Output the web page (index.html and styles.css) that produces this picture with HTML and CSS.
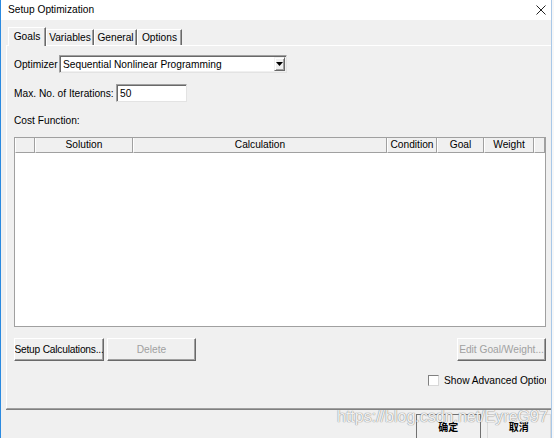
FILE: index.html
```html
<!DOCTYPE html>
<html>
<head>
<meta charset="utf-8">
<link rel="stylesheet" href="styles.css">
</head>
<body>
<div class="window">
  <div class="titlebar">
    <span class="title">Setup Optimization</span>
    <svg class="close" width="10" height="10" viewBox="0 0 10 10"><path d="M0.5 0.5 L9.5 9.5 M9.5 0.5 L0.5 9.5" stroke="#222" stroke-width="1" fill="none"/></svg>
  </div>
  <div class="tabs">
    <div class="tab active w-goals">Goals</div>
    <div class="tab w-vars">Variables</div>
    <div class="tab w-gen">General</div>
    <div class="tab w-opt">Options</div>
  </div>
  <div class="panel">
    <div class="row row-opt">
      <span class="lbl lbl-opt">Optimizer</span>
      <div class="select">
        <span class="sel-text">Sequential Nonlinear Programming</span>
        <span class="sel-btn"><svg width="7" height="4" viewBox="0 0 7 4"><path d="M0 0 H7 L3.5 4 Z" fill="#000"/></svg></span>
      </div>
    </div>
    <div class="row row-iter">
      <span class="lbl lbl-iter">Max. No. of Iterations:</span>
      <div class="input">50</div>
    </div>
    <div class="cost">Cost Function:</div>
    <div class="table">
      <div class="thead">
        <div class="th c0"></div>
        <div class="th c1">Solution</div>
        <div class="th c2">Calculation</div>
        <div class="th c3">Condition</div>
        <div class="th c4">Goal</div>
        <div class="th c5">Weight</div>
        <div class="th c6"></div>
      </div>
      <div class="tbody"></div>
    </div>
    <div class="btnrow">
      <div class="btn b-setup">Setup Calculations...</div>
      <div class="btn b-del disabled">Delete</div>
      <div class="spacer"></div>
      <div class="btn b-edit disabled">Edit Goal/Weight...</div>
    </div>
    <div class="chkrow">
      <span class="chk"></span>
      <span class="chk-text">Show Advanced Options</span>
    </div>
  </div>
  <div class="bottom">
    <div class="dbtn ok">确定</div>
    <div class="dbtn cancel">取消</div>
  </div>
  <div class="watermark">https://blog.csdn.net/EyreG97</div>
</div>
</body>
</html>
```
FILE: styles.css
```css
html, body {
  margin: 0;
  padding: 0;
  background: #f7f7f7;
}
body {
  width: 554px;
  height: 438px;
  overflow: hidden;
  font-family: "Liberation Sans", Arial, "Noto Sans CJK SC", sans-serif;
  font-size: 10.2px;
  color: #000;
}
.window {
  position: relative;
  width: 552px;
  height: 438px;
  box-sizing: border-box;
  border-left: 1px solid #2b8ae0;
  border-right: 1px solid #a9c8e8;
  background: #f0f0f0;
  display: flex;
  flex-direction: column;
  overflow: hidden;
}
.titlebar {
  height: 20px;
  flex-shrink: 0;
  background: #fff;
  display: flex;
  align-items: center;
  justify-content: space-between;
  padding: 0 5px 1px 7px;
  box-sizing: border-box;
}
.close {
  display: block;
}
.tabs {
  display: flex;
  align-items: flex-end;
  height: 18px;
  flex-shrink: 0;
  margin-top: 7px;
  padding-left: 7px;
}
.tab {
  height: 16px;
  box-sizing: border-box;
  border-top: 1px solid #fff;
  border-left: 1px solid #fff;
  border-right: 1px solid #696969;
  box-shadow: inset -1px 0 #a0a0a0;
  display: flex;
  align-items: center;
  justify-content: center;
}
.tab.active {
  height: 19px;
  margin-bottom: -1px;
  background: #f0f0f0;
  position: relative;
  z-index: 1;
  padding-bottom: 1px;
}
.w-goals { width: 38px; }
.w-vars { width: 48px; }
.w-gen { width: 43px; }
.w-opt { width: 45px; }
.panel {
  margin-left: 5px;
  height: 364px;
  flex-shrink: 0;
  box-sizing: border-box;
  border-top: 1px solid #fff;
  border-left: 1px solid #fff;
  border-bottom: 1px solid #a0a0a0;
  box-shadow: 0 1px #808080;
  padding-left: 7px;
  display: flex;
  flex-direction: column;
}
.row {
  display: flex;
  align-items: center;
  height: 18px;
  flex-shrink: 0;
}
.row-opt { margin-top: 9px; }
.row-iter { margin-top: 11px; }
.lbl-opt { width: 45px; }
.lbl-iter { width: 102px; }
.select {
  width: 228px;
  height: 18px;
  box-sizing: border-box;
  background: #fff;
  border: 1px solid;
  border-color: #a0a0a0 #e3e3e3 #e3e3e3 #a0a0a0;
  box-shadow: inset 1px 1px #696969, inset -1px -1px #f0f0f0;
  display: flex;
  align-items: center;
  justify-content: space-between;
  padding-left: 3px;
}
.sel-btn {
  width: 11px;
  height: 14px;
  margin-right: 1px;
  box-sizing: border-box;
  background: #f0f0f0;
  border: 1px solid;
  border-color: #f0f0f0 #696969 #696969 #f0f0f0;
  box-shadow: inset 1px 1px #fff, inset -1px -1px #a0a0a0;
  display: flex;
  align-items: center;
  justify-content: center;
}
.input {
  width: 71px;
  height: 18px;
  box-sizing: border-box;
  background: #fff;
  border: 1px solid;
  border-color: #a0a0a0 #e3e3e3 #e3e3e3 #a0a0a0;
  box-shadow: inset 1px 1px #696969;
  padding-left: 3px;
  display: flex;
  align-items: center;
}
.cost {
  margin-top: 13px;
  height: 12px;
  line-height: 12px;
  flex-shrink: 0;
}
.table {
  margin-top: 10px;
  width: 532px;
  height: 190px;
  flex-shrink: 0;
  box-sizing: border-box;
  border: 1px solid #a0a0a0;
  background: #fff;
  display: flex;
  flex-direction: column;
}
.thead {
  display: flex;
  height: 15px;
  background: #f0f0f0;
}
.th {
  box-sizing: border-box;
  height: 15px;
  border-right: 1px solid #a0a0a0;
  border-bottom: 1px solid #a0a0a0;
  border-left: 1px solid #fff;
  text-align: center;
  line-height: 14px;
}
.c0 { width: 20px; }
.c1 { width: 98px; }
.c2 { width: 254px; }
.c3 { width: 50px; }
.c4 { width: 47px; }
.c5 { width: 50px; }
.c6 { width: 11px; }
.tbody {
  flex: 1;
  background: #fff;
}
.btnrow {
  display: flex;
  margin-top: 11px;
  width: 532px;
  gap: 3px;
  flex-shrink: 0;
}
.spacer { flex: 1; }
.btn {
  height: 23px;
  box-sizing: border-box;
  border: 1px solid;
  border-color: #fff #696969 #696969 #fff;
  box-shadow: inset -1px -1px #a0a0a0;
  display: flex;
  align-items: center;
  justify-content: center;
  white-space: nowrap;
  overflow: hidden;
}
.b-setup { width: 90px; letter-spacing: -0.2px; }
.b-del { width: 89px; }
.b-edit { width: 89px; }
.disabled { color: #a0a0a0; }
.chkrow {
  margin-top: 13px;
  display: flex;
  align-items: center;
  justify-content: flex-end;
  width: 532px;
  height: 12px;
  flex-shrink: 0;
  overflow: hidden;
}
.chk {
  width: 9px;
  height: 9px;
  background: #fff;
  border: 1px solid;
  border-color: #808080 #d8d8d8 #d8d8d8 #808080;
  margin-right: 5px;
  flex-shrink: 0;
}
.chk-text {
  width: 102px;
  overflow: hidden;
  white-space: nowrap;
}
.bottom {
  display: flex;
  margin-top: 5px;
  padding-left: 415px;
  gap: 6px;
}
.dbtn {
  width: 66px;
  height: 26px;
  box-sizing: border-box;
  display: flex;
  align-items: center;
  justify-content: center;
  font-family: "Noto Sans CJK SC", sans-serif;
  font-size: 10px;
  font-weight: bold;
  padding-bottom: 2px;
}
.ok {
  border: 1px solid #707070;
  border-bottom: none;
}
.cancel {
  border: 1px solid #dadada;
  border-bottom: none;
}
.watermark {
  position: absolute;
  left: 336px;
  top: 408px;
  font-size: 16px;
  color: rgba(255, 255, 255, 0.9);
  text-shadow: 0 0 1px #8a8a8a, 0 0 1px #8a8a8a;
  white-space: nowrap;
  pointer-events: none;
}
```
